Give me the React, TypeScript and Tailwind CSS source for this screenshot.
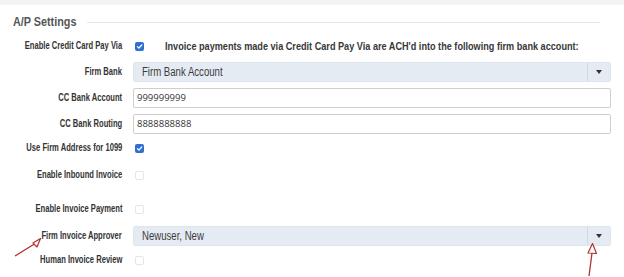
import React from "react";

const LBL = "font-['Liberation_Sans',Arial,sans-serif]";

function Label({ children }: { children: React.ReactNode }) {
  return (
    <div className="flex justify-end items-center h-full whitespace-nowrap">
      <span className={`${LBL} inline-block origin-right scale-x-[0.76] leading-none text-[10px] font-bold text-[#333]`}>
        {children}
      </span>
    </div>
  );
}

function Check({ checked }: { checked?: boolean }) {
  if (checked) {
    return (
      <div className="ml-[2px] w-[9px] h-[9px] rounded-[2px] bg-[#2f6fd3] flex items-center justify-center shrink-0">
        <svg width="7" height="7" viewBox="0 0 10 10">
          <path d="M2 5.2 L4.2 7.3 L8.2 2.8" stroke="white" strokeWidth="1.8" fill="none" strokeLinecap="round" strokeLinejoin="round" />
        </svg>
      </div>
    );
  }
  return <div className="ml-[2px] w-[9px] h-[9px] rounded-[2px] border border-[#e6e6e6] bg-white shrink-0" />;
}

function Row({ label, children, className = "" }: { label: string; children: React.ReactNode; className?: string }) {
  return (
    <div className={`grid grid-cols-[122px_1fr] gap-x-[11px] h-[20px] items-center ${className}`}>
      <Label>{label}</Label>
      <div className="flex items-center h-full min-w-0">{children}</div>
    </div>
  );
}

function Select({ value }: { value: string }) {
  return (
    <div className="flex h-full w-full rounded-[2px] bg-[#e5ebf3] border border-[#dfe5ec]">
      <div className="flex-1 flex items-center pl-[8px]">
        <span className={`${LBL} inline-block origin-left scale-x-[0.8] text-[12px] text-[#3c3c3c] whitespace-nowrap`}>{value}</span>
      </div>
      <div className="w-[23px] border-l border-[#d3d9e0] flex items-center justify-center">
        <svg width="6" height="4" viewBox="0 0 6 4">
          <path d="M0 0 H6 L3 4 Z" fill="#333" />
        </svg>
      </div>
    </div>
  );
}

function Input({ value }: { value: string }) {
  return (
    <div className="flex items-center h-full w-full rounded-[2px] border border-[#cfcfcf] bg-white pl-[3px] font-['Open_Sans',sans-serif] text-[9.5px] text-[#333]">
      {value}
    </div>
  );
}

export default function App() {
  return (
    <div className="relative w-[624px] h-[277px] bg-white overflow-hidden">
      <div className="h-[5px] bg-[#f3f3f3]" />
      <div className="pr-[13px]">
        <div className="h-[31px] pt-[3px] flex items-center pl-[13px]">
          <span className={`${LBL} inline-block origin-left scale-x-[0.9] text-[12px] font-bold text-[#555] whitespace-nowrap`}>A/P Settings</span>
          <div className="ml-[4px] mr-[11px] flex-1 h-px bg-[#e8e8e8]" />
        </div>
        <Row label="Enable Credit Card Pay Via">
          <Check checked />
          <span className={`${LBL} inline-block origin-left scale-x-[0.83] ml-[21px] text-[11px] font-bold text-[#383838] whitespace-nowrap`}>
            Invoice payments made via Credit Card Pay Via are ACH'd into the following firm bank account:
          </span>
        </Row>
        <Row label="Firm Bank" className="mt-[6px]">
          <Select value="Firm Bank Account" />
        </Row>
        <Row label="CC Bank Account" className="mt-[6px]">
          <Input value="999999999" />
        </Row>
        <Row label="CC Bank Routing" className="mt-[6px]">
          <Input value="8888888888" />
        </Row>
        <Row label="Use Firm Address for 1099" className="mt-[4px]">
          <Check checked />
        </Row>
        <Row label="Enable Inbound Invoice" className="mt-[7px]">
          <Check />
        </Row>
        <Row label="Enable Invoice Payment" className="mt-[14px]">
          <Check />
        </Row>
        <Row label="Firm Invoice Approver" className="mt-[7px]">
          <Select value="Newuser, New" />
        </Row>
        <Row label="Human Invoice Review" className="mt-[4px]">
          <Check />
        </Row>
      </div>
      <svg className="absolute left-0 top-0 pointer-events-none" width="624" height="277" viewBox="0 0 624 277">
        <line x1="15" y1="256" x2="36" y2="243" stroke="#b23030" strokeWidth="1.3" />
        <path d="M33 243 L40.5 238.5 L37 247 Z" stroke="#b23030" strokeWidth="1.2" fill="white" strokeLinejoin="round" />
        <line x1="589" y1="276" x2="592" y2="253" stroke="#b23030" strokeWidth="1.3" />
        <path d="M588 253 L592.5 243.5 L596.5 253.5 Z" stroke="#b23030" strokeWidth="1.2" fill="white" strokeLinejoin="round" />
      </svg>
    </div>
  );
}
